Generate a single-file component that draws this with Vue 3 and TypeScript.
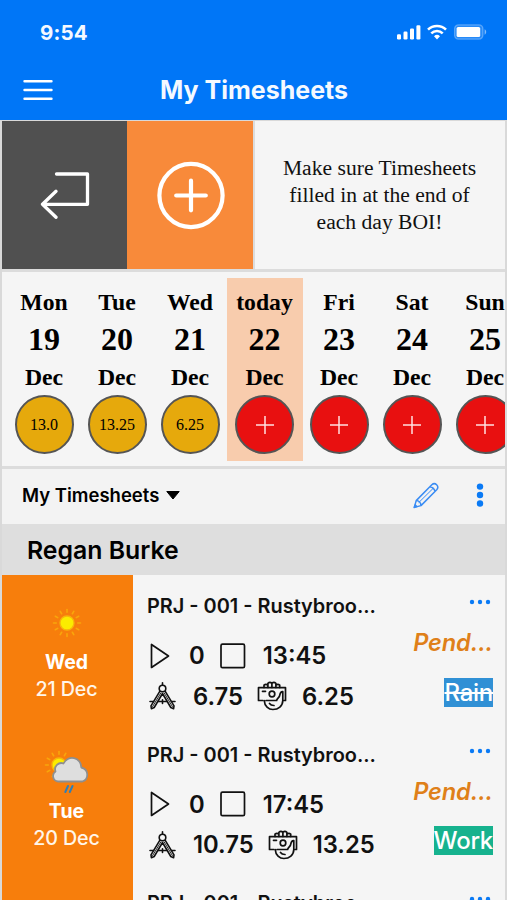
<script setup lang="ts">
interface Day {
  name: string
  date: number
  hours?: string
  today?: boolean
}

interface Entry {
  day: string
  date: string
  weather: 'sun' | 'rain'
  start: string
  stop: string
  site: string
  paid: string
  status: string
  tag: string
  kind: 'off' | 'work'
}

const week: Day[] = [
  { name: 'Mon', date: 19, hours: '13.0' },
  { name: 'Tue', date: 20, hours: '13.25' },
  { name: 'Wed', date: 21, hours: '6.25' },
  { name: 'today', date: 22, today: true },
  { name: 'Fri', date: 23 },
  { name: 'Sat', date: 24 },
  { name: 'Sun', date: 25 },
]

const project = 'PRJ - 001 - Rustybroo...'

const entries: Entry[] = [
  { day: 'Wed', date: '21 Dec', weather: 'sun', start: '0', stop: '13:45', site: '6.75', paid: '6.25', status: 'Pend...', tag: 'Rain', kind: 'off' },
  { day: 'Tue', date: '20 Dec', weather: 'rain', start: '0', stop: '17:45', site: '10.75', paid: '13.25', status: 'Pend...', tag: 'Work', kind: 'work' },
  { day: 'Mon', date: '19 Dec', weather: 'sun', start: '0', stop: '17:30', site: '10.5', paid: '13.0', status: 'Pend...', tag: 'Work', kind: 'work' },
]

const rays = Array.from({ length: 12 }, (_, i) => i * 30)
</script>

<template>
  <div class="screen">
    <header class="header">
      <div class="status-bar">
        <span class="clock">9:54</span>
        <div class="signals">
          <svg class="bars" width="24" height="16" viewBox="0 0 24 16" fill="#fff">
            <rect x="0" y="10.2" width="4" height="5.2" rx="1.2" />
            <rect x="6.5" y="7.6" width="4" height="7.8" rx="1.2" />
            <rect x="13" y="4.4" width="4" height="11" rx="1.2" />
            <rect x="19.4" y="1.2" width="4" height="14.2" rx="1.2" />
          </svg>
          <svg class="wifi" width="20" height="16" viewBox="0 0 20 16" fill="none" stroke="#fff" stroke-width="2.6">
            <path d="M1 5.7a12.8 12.8 0 0 1 18 0" />
            <path d="M4.3 9.3a8.1 8.1 0 0 1 11.4 0" />
            <path d="M7 12.2a4.3 4.3 0 0 1 6 0L10 15.4z" fill="#fff" stroke="none" />
          </svg>
          <svg class="battery" width="33" height="16" viewBox="0 0 33 16">
            <rect x=".6" y=".9" width="28.3" height="14.2" rx="4" fill="#fff" fill-opacity=".15" stroke="#fff" stroke-opacity=".3" stroke-width="1.3" />
            <rect x="2.6" y="3" width="23.6" height="10" rx="1.600" fill="#fff" />
            <path d="M30.600 5.300c2.100.7 2.100 4.700 0 5.400z" fill="#fff" fill-opacity=".5" />
          </svg>
        </div>
      </div>
      <div class="nav">
        <svg class="burger" width="30" height="22" viewBox="0 0 30 22" stroke="#fff" stroke-width="2.4" stroke-linecap="round">
          <path d="M1.5 2.2h27M1.5 11h27M1.5 19.8h27" />
        </svg>
        <h1>My Timesheets</h1>
      </div>
    </header>

    <main class="body">
      <section class="actions">
        <button class="action back">
          <svg width="50" height="48" viewBox="0 0 50 48" fill="none" stroke="#fff" stroke-width="3.300" stroke-linecap="round" stroke-linejoin="round">
            <path d="M16.500 3h31v30.300H2.500M16 20.300L2.500 33.300L16 46.300" />
          </svg>
        </button>
        <button class="action add">
          <svg width="70" height="70" viewBox="0 0 70 70" fill="none" stroke="#fff" stroke-width="4.200" stroke-linecap="round">
            <circle cx="36" cy="35.500" r="31.600" />
            <path d="M36 20.700v29.600M21.200 35.500h29.600" />
          </svg>
        </button>
        <p class="notice">Make sure Timesheets filled in at the end of each day BOI!</p>
      </section>

      <section class="week">
        <div v-for="d in week" :key="d.date" class="day" :class="{ today: d.today }">
          <span class="name">{{ d.name }}</span>
          <span class="date">{{ d.date }}</span>
          <span class="month">Dec</span>
          <span v-if="d.hours" class="bubble logged">{{ d.hours }}</span>
          <span v-else class="bubble empty">
            <svg width="18" height="18" viewBox="0 0 18 18" stroke="#ffe0e0" stroke-width="1.500">
              <path d="M9 0v18M0 9h18" />
            </svg>
          </span>
        </div>
      </section>

      <section class="toolbar">
        <span class="view">My Timesheets</span>
        <svg class="caret" width="14" height="9" viewBox="0 0 14 9"><path d="M.8.500h12.400L7 8z" fill="#000" stroke="#000" stroke-linejoin="round" /></svg>
        <svg class="pencil" width="27" height="27" viewBox="0 0 27 27" fill="none" stroke="#3a8cf3" stroke-width="1.500" stroke-linejoin="round">
          <path d="M1.300 25.400L3.200 18.600 18.800 2.800c3.300-3 8 1.300 4.900 5L8 23.600zM3.200 18.600c2.600.1 4.700 2.200 4.800 5M17 4.700c2.700.5 4.500 2.300 5.100 4.900" />
          <path d="M5.600 20.700L20 6.500" stroke-width="1" />
          <path d="M1.300 25.400l.8-2.500 1.700 1.700z" fill="#0a7af5" />
        </svg>
        <svg class="kebab" width="8" height="24" viewBox="0 0 8 24" fill="#0a7af5">
          <circle cx="4" cy="3.600" r="3.200" /><circle cx="4" cy="12" r="3.200" /><circle cx="4" cy="20.500" r="3.200" />
        </svg>
      </section>

      <h2 class="person">Regan Burke</h2>

      <article v-for="e in entries" :key="e.date" class="entry">
        <div class="when">
          <svg class="weather" width="50" height="46" viewBox="0 0 50 46">
            <template v-if="e.weather === 'sun'">
              <g stroke="#f8a60b" stroke-width="1.600" stroke-linecap="round">
                <line v-for="r in rays" :key="r" x1="25" y1="9.500" x2="25" y2="12.300" :transform="`rotate(${r} 25 23)`" />
              </g>
              <circle cx="25" cy="23" r="7" fill="#fbec00" stroke="#f8b50b" stroke-width="1.300" />
            </template>
            <template v-else>
              <g stroke="#f8a60b" stroke-width="1.600" stroke-linecap="round">
                <line v-for="r in rays" :key="r" x1="17" y1="2.500" x2="17" y2="5.300" :transform="`rotate(${r} 17 16)`" />
              </g>
              <circle cx="17" cy="16" r="7" fill="#fbec00" stroke="#f8b50b" stroke-width="1.300" />
              <path d="M16 32.500a5.500 5.500 0 0 1-2.500-10 6.200 6.200 0 0 1 8-8 9.300 9.300 0 0 1 17.800 4 7.300 7.300 0 0 1 1.200 14z" fill="#dedede" stroke="#8f8f8f" stroke-width="1.800" stroke-linejoin="round" />
              <path d="M26 37l-2.700 6M30.500 37l-2.700 6" stroke="#2f7fb8" stroke-width="2" stroke-linecap="round" />
            </template>
          </svg>
          <strong>{{ e.day }}</strong>
          <span>{{ e.date }}</span>
        </div>

        <div class="details">
          <div class="line title">{{ project }}</div>
          <div class="line times">
            <svg class="play" width="21" height="26" viewBox="0 0 21 26" fill="none" stroke="#111" stroke-width="1.700" stroke-linejoin="round">
              <path d="M2.500 1.500v23L19.500 13z" />
            </svg>
            <span class="start">{{ e.start }}</span>
            <svg class="stop" width="26" height="26" viewBox="0 0 26 26" fill="none" stroke="#111" stroke-width="1.700">
              <rect x="1" y="1.200" width="23.500" height="23.500" rx="1.500" />
            </svg>
            <span>{{ e.stop }}</span>
          </div>
          <div class="line totals">
            <svg class="compass" width="27" height="28" viewBox="0 0 27 28" fill="none" stroke="#111" stroke-width="1.600" stroke-linecap="round" stroke-linejoin="round">
              <path d="M13.500.800v2.200" />
              <path d="M10.900 9.200L2 23.800l.4 2.900 2.800-1.200L13.500 11.500l8.300 14 2.800 1.200.4-2.900L16.100 9.200" />
              <path d="M1 19.500h3.600M9 19.500h9M22.400 19.500H26M13.500 17.800v3.600" />
              <path d="M11.800 11L3.600 24.600M15.200 11l8.200 13.600" stroke-width=".9" />
              <circle cx="13.500" cy="6.500" r="3.300" fill="#f5f5f5" />
            </svg>
            <span>{{ e.site }}</span>
            <svg class="pay" width="30" height="30" viewBox="0 0 30 30" fill="none" stroke="#111" stroke-width="1.700" stroke-linecap="round" stroke-linejoin="round">
              <path d="M7 6.500V4.200q1.900-1.800 3.900 0V2.300q2-1.800 4 0q2-1.800 4 0v1.900q2-1.600 3.800 0v2.300M10.900 4v2.500M14.900 2.500v4M18.900 4v2.500" />
              <path d="M6 19.500H1.500V6.700h27v12.800h-1.700M5.500 10.300h3" />
              <circle cx="15" cy="13" r="2.800" />
              <path d="M7.300 19.700c.2 5.300 4.300 8.800 8.600 8.800 5.500 0 9.800-3.500 9.900-9V10.700c-2.500-.4-2.600 1.500-3.200 4-.4 1.900-2.400 2.500-3 4.800M9 19.500h10.600M12.500 22.500c1 1.500 2.500 2 4.500 2" />
            </svg>
            <span>{{ e.paid }}</span>
          </div>
        </div>

        <div class="side">
          <svg class="more" width="22" height="6" viewBox="0 0 22 6" fill="#0a7af5">
            <circle cx="3" cy="3" r="2.200" /><circle cx="11" cy="3" r="2.200" /><circle cx="19" cy="3" r="2.200" />
          </svg>
          <em>{{ e.status }}</em>
          <span class="tag" :class="e.kind">{{ e.tag }}</span>
        </div>
      </article>
    </main>
  </div>
</template>

<style>
body {
  margin: 0;
  overflow: hidden;
}
</style>

<style scoped>
.screen {
  display: flex;
  flex-direction: column;
  width: 507px;
  height: 900px;
  overflow: hidden;
  background: #f5f5f5;
  color: #111;
  font-family: Inter, 'Liberation Sans', sans-serif;
}
svg {
  display: block;
  flex: none;
}
.header {
  flex: none;
  height: 120px;
  background: #0076f7;
  color: #f4f9ff;
}
.status-bar {
  display: flex;
  justify-content: space-between;
  align-items: center;
  height: 64px;
  padding: 0 20px 0 40px;
}
.clock {
  font-size: 20.5px;
  font-weight: 700;
  letter-spacing: 0.2px;
}
.signals {
  display: flex;
  align-items: center;
}
.wifi {
  margin-left: 6px;
}
.battery {
  margin-left: 7px;
}
.nav {
  display: grid;
  grid-template-columns: 30px 1fr 30px;
  align-items: center;
  height: 51px;
  padding: 0 22px 0 23px;
}
.nav h1 {
  margin: 0;
  text-align: center;
  font-size: 25px;
  font-weight: 750;
  line-height: 50px;
}
.body {
  flex: 1;
  min-height: 0;
  border: 1px solid #d9d9d9;
  border-width: 1px 2px 0;
  overflow: hidden;
}
.actions {
  display: flex;
  height: 148px;
  border-bottom: 3px solid #dcdcdc;
}
.action {
  display: flex;
  align-items: center;
  justify-content: center;
  flex: none;
  padding: 0;
  border: 0;
}
.back {
  width: 125px;
  background: #505050;
}
.add {
  width: 126px;
  background: #f88a3a;
}
.notice {
  flex: 1;
  align-self: stretch;
  margin: 0;
  padding: 34px 23px 0 22px;
  border-left: 2px solid #dcdcdc;
  font: 21.6px/27px 'Liberation Serif', serif;
  text-align: center;
}
.week {
  display: flex;
  height: 194px;
  padding-left: 5.5px;
  border-bottom: 3px solid #dcdcdc;
  overflow: hidden;
  font-family: 'Liberation Serif', serif;
  font-weight: 700;
  color: #000;
}
.day {
  display: flex;
  flex: none;
  flex-direction: column;
  align-items: center;
  box-sizing: border-box;
  width: 73px;
  height: 183px;
  margin-top: 6px;
  padding-top: 5px;
}
.day.today {
  width: 76px;
  background: #f8ccad;
}
.name,
.month {
  font-size: 23.7px;
  line-height: 38px;
}
.date {
  font-size: 32px;
  line-height: 37px;
}
.bubble {
  display: flex;
  flex: none;
  align-items: center;
  justify-content: center;
  width: 59px;
  height: 59px;
  margin-top: -1px;
  box-sizing: border-box;
  border: 2.5px solid #555;
  border-radius: 50%;
  font-size: 16px;
  font-weight: 400;
}
.logged {
  background: #e6a90c;
}
.empty {
  background: #e81010;
}
.toolbar {
  display: flex;
  align-items: center;
  box-sizing: border-box;
  height: 55px;
  padding: 0 21px 3px 20px;
  background: #f3f3f3;
  color: #000;
}
.view {
  font-size: 18.5px;
  font-weight: 560;
}
.caret {
  margin-left: 7px;
}
.pencil {
  margin-left: auto;
}
.kebab {
  margin-left: 36px;
}
.person {
  height: 51px;
  margin: 0;
  padding-left: 25px;
  background: #dedede;
  color: #000;
  font-size: 24.8px;
  font-weight: 560;
  line-height: 52px;
}
.entry {
  display: flex;
  height: 148.5px;
}
.when {
  display: flex;
  flex: none;
  flex-direction: column;
  align-items: center;
  width: 131px;
  padding: 25px 2px 0 0;
  box-sizing: border-box;
  background: #f77e0c;
  color: #fff6ea;
  font-size: 19.5px;
  line-height: 27px;
}
.when strong {
  margin-top: 3px;
  color: #fff;
  font-weight: 750;
}
.when span {
  font-size: 19.7px;
  font-weight: 500;
  letter-spacing: -0.1px;
}
.details {
  flex: none;
  width: 260px;
  padding: 11px 0 0 14px;
  box-sizing: border-box;
}
.line {
  display: flex;
  align-items: center;
  height: 40px;
  white-space: nowrap;
  font-size: 23.8px;
  font-weight: 570;
}
.title {
  font-size: 19.9px;
}
.times {
  height: 59px;
  padding-left: 2px;
}
.totals {
  margin-top: -9px;
  padding-left: 2px;
}
.play {
  margin-right: 19px;
}
.stop {
  margin: 0 17px 0 15px;
}
.compass {
  margin-right: 17px;
}
.pay {
  margin: 0 15px 0 14px;
}
.side {
  display: flex;
  flex: 1;
  flex-direction: column;
  align-items: flex-end;
  padding-right: 12px;
}
.more {
  margin: 24px 2px 0 0;
}
.side em {
  margin-top: 24px;
  color: #df8019;
  font-size: 23.6px;
  font-weight: 560;
  line-height: 28px;
  letter-spacing: -0.1px;
}
.tag {
  margin-top: 20.5px;
  color: #fff;
  font-size: 24px;
  font-weight: 500;
  line-height: 29px;
  letter-spacing: -0.25px;
}
.off {
  background: #3090d5;
  text-decoration: line-through;
}
.work {
  background: #16b28e;
}
</style>
